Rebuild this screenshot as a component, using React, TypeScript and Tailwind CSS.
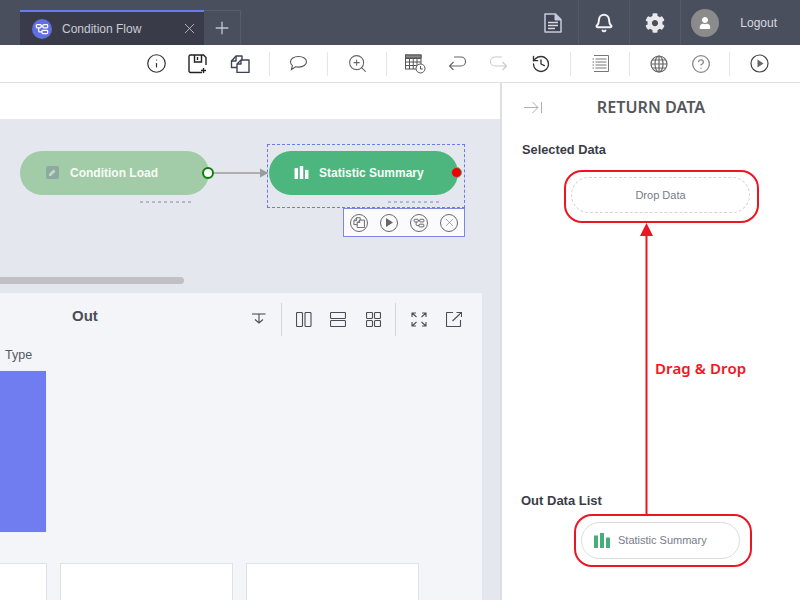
import React from "react";
import { Bell, Info, ZoomIn, History, CircleHelp, Plus, X } from "lucide-react";
import { FaCog, FaUser } from "react-icons/fa";

const FlowGlyph = ({ size = 16, color = "#fff", sw = 1.4 }: { size?: number; color?: string; sw?: number }) => (
  <svg width={size} height={size} viewBox="0 0 16 16" fill="none" stroke={color} strokeWidth={sw}>
    <rect x="1.5" y="3" width="5.5" height="3.6" rx="1" />
    <rect x="9" y="3" width="5.5" height="3.6" rx="1" />
    <rect x="8" y="9.6" width="6.5" height="3.6" rx="1" />
    <path d="M4.2 6.6v3.4c0 .8.5 1.4 1.3 1.4H8M7 4.8h2" />
  </svg>
);

const CopyGlyph = ({ w = 20, h = 18, color = "#3b4250", sw = 1.4 }: { w?: number; h?: number; color?: string; sw?: number }) => (
  <svg width={w} height={h} viewBox="0 0 20 18" fill="none" stroke={color} strokeWidth={sw} strokeLinejoin="round">
    <path d="M7 12.500H1.500V6L6 1h6v4" />
    <path d="M6 1v5H1.500" />
    <path d="M11 5h8v12.500H7V9z" />
    <path d="M11 5v4H7" />
  </svg>
);

const Sep = ({ cls = "" }: { cls?: string }) => <div className={`h-[24px] w-[1px] bg-[#e6e6e8] ${cls}`} />;

const ToolIcon = ({ children }: { children: React.ReactNode }) => (
  <div className="flex h-[24px] w-[42px] items-center justify-center">{children}</div>
);

const OutIcon = ({ children, cls }: { children: React.ReactNode; cls: string }) => (
  <div className={`flex h-[20px] items-center justify-center ${cls}`}>{children}</div>
);

const Bars = ({ color, w = 16, h = 15 }: { color: string; w?: number; h?: number }) => (
  <svg width={w} height={h} viewBox="0 0 16 15" fill={color}>
    <rect x="0" y="2.500" width="4" height="12.500" />
    <rect x="6" y="0" width="4" height="15" />
    <rect x="12" y="4.500" width="4" height="10.500" />
  </svg>
);

const Dashes = () => (
  <svg width="52" height="4" viewBox="0 0 52 4">
    <path d="M0 2h52" stroke="#7c88b0" strokeWidth="1" strokeDasharray="3 3" />
  </svg>
);

const MiniCircle = ({ children }: { children: React.ReactNode }) => (
  <div className="flex h-[18px] w-[18px] items-center justify-center rounded-full border border-[#6a6a6a]">{children}</div>
);

export default function App() {
  const sans = "font-['Liberation_Sans',Arial,sans-serif]";
  return (
    <div className={`flex h-[600px] w-[800px] flex-col overflow-hidden bg-white ${sans}`}>
      {/* Header */}
      <header className="flex h-[45px] shrink-0 items-end bg-[#4a4f5e]">
        <div className="ml-[20px] flex h-[35px] w-[184px] items-center border-t-2 border-[#6b7bef] bg-[#393c48] pl-[12px]">
          <div className="flex h-[20px] w-[20px] items-center justify-center rounded-full bg-[#626fe0]">
            <FlowGlyph size={14} />
          </div>
          <span className="ml-[10px] text-[12px] text-[#c9ccd6]">Condition Flow</span>
          <X size={17} strokeWidth={1.2} className="ml-auto mr-[6px] text-[#c4c6ce]" />
        </div>
        <div className="flex h-[35px] w-[37px] items-center justify-center border border-b-0 border-l-0 border-[#585d6c]">
          <Plus size={20} strokeWidth={1.6} className="text-[#c2c5ce]" />
        </div>
        <div className="ml-auto flex h-[45px] items-center">
          <div className="flex h-full w-[51px] items-center justify-center border-r border-[#555a69]">
            <svg width="18" height="20" viewBox="0 0 18 20" fill="none">
              <path d="M1 1h10.5L17 6.5V19H1z" fill="#3f4352" stroke="#c3cbdc" strokeWidth="1.5" strokeLinejoin="round" />
              <path d="M11 1v6h6" fill="#c3cbdc" stroke="#c3cbdc" strokeWidth="1" />
              <path d="M4 9.5h10M4 12.5h10M4 15.5h7" stroke="#d6d9e2" strokeWidth="1.4" />
            </svg>
          </div>
          <div className="flex h-full w-[51px] items-center justify-center border-r border-[#555a69]">
            <Bell size={20} strokeWidth={2.4} className="text-[#f2f2f4]" />
          </div>
          <div className="flex h-full w-[51px] items-center justify-center border-r border-[#555a69]">
            <FaCog size={20} className="text-[#e9e9ec]" />
          </div>
          <div className="ml-[10px] flex h-[28px] w-[28px] items-center justify-center rounded-full bg-[#8b8b8c]">
            <FaUser size={12} className="text-white" />
          </div>
          <span className="ml-[21px] mr-[23px] text-[12px] text-[#d8dae0]">Logout</span>
        </div>
      </header>

      {/* Toolbar */}
      <div className="flex h-[38px] shrink-0 items-center justify-end gap-[8px] border-b border-[#dfdfe2] pr-[20px]">
        <div className="flex">
          <ToolIcon><Info size={21} strokeWidth={1.4} className="text-[#333]" /></ToolIcon>
          <ToolIcon>
            <svg width="20" height="20" viewBox="0 0 20 20" fill="none" stroke="#222" strokeWidth="1.4">
              <path d="M1 2.500A1.500 1.500 0 0 1 2.500 1h13L18 3.500V11M14 18.500H2.500A1.500 1.500 0 0 1 1 17V2.500" />
              <path d="M6.500 1v7h7V1M9.500 3v3" />
              <path d="M15.500 14v5M13 16.500h5" />
            </svg>
          </ToolIcon>
          <ToolIcon><CopyGlyph /></ToolIcon>
        </div>
        <Sep cls="mr-[-1px]" />
        <ToolIcon>
          <svg width="19" height="17" viewBox="0 0 19 17" fill="none" stroke="#555" strokeWidth="1.1">
            <path d="M9.500 1.500c4.700 0 8 2.300 8 5.300s-3.300 5.300-8 5.300c-1 0-2-.1-2.900-.3L2.500 14.500l.9-3.900C2 9.600 1.500 8.300 1.500 6.800c0-3 3.300-5.300 8-5.300z" />
          </svg>
        </ToolIcon>
        <Sep />
        <ToolIcon><ZoomIn size={21} strokeWidth={1.2} className="text-[#666]" /></ToolIcon>
        <Sep cls="mr-[-1px]" />
        <div className="flex">
          <ToolIcon>
            <svg width="21" height="20" viewBox="0 0 21 20" fill="none" stroke="#555" strokeWidth="1">
              <rect x="0.500" y="1" width="15.500" height="14" fill="#fff" />
              <path d="M.5 4.500h15.500M.5 8h15.500M.5 11.500h15.500M4.500 4.500V15M8.250 4.500V15M12 4.500V15" />
              <rect x="0.500" y="1" width="15.500" height="3" fill="#888" />
              <circle cx="15.500" cy="14.500" r="4.500" fill="#fff" />
              <path d="M15.500 12v3h2.300" />
            </svg>
          </ToolIcon>
          <ToolIcon>
            <svg width="18" height="16" viewBox="0 0 18 16" fill="none" stroke="#666" strokeWidth="1.1">
              <path d="M6 1h7a4.500 4.500 0 0 1 0 9H1.500M5.500 6l-4 4 4 4" />
            </svg>
          </ToolIcon>
          <ToolIcon>
            <svg width="18" height="16" viewBox="0 0 18 16" fill="none" stroke="#c9c9c9" strokeWidth="1.1">
              <path d="M12 1H5a4.500 4.500 0 0 0 0 9h11.500M12.500 6l4 4-4 4" />
            </svg>
          </ToolIcon>
          <ToolIcon><History size={20} strokeWidth={1.6} className="text-[#333]" /></ToolIcon>
        </div>
        <Sep />
        <ToolIcon>
          <svg width="17" height="17" viewBox="0 0 17 17" fill="none" stroke="#777" strokeWidth="1">
            <path d="M2 .5h14.500v16H2" />
            <path d="M3.500 4h11M3.500 7h11M3.500 10h11M3.500 13h11" />
            <path d="M.5 4h1.500M.5 7h1.500M.5 10h1.500M.5 13h1.500" />
          </svg>
        </ToolIcon>
        <Sep />
        <div className="flex">
          <ToolIcon>
            <svg width="18" height="18" viewBox="0 0 18 18" fill="none" stroke="#666" strokeWidth="1.2">
              <circle cx="9" cy="9" r="8" />
              <ellipse cx="9" cy="9" rx="4" ry="8" />
              <path d="M9 1v16M1 9h16M2 5h14M2 13h14" />
            </svg>
          </ToolIcon>
          <ToolIcon><CircleHelp size={20} strokeWidth={1.6} className="text-[#8a8a8a]" /></ToolIcon>
        </div>
        <Sep cls="ml-[-1px]" />
        <ToolIcon>
          <svg width="19" height="19" viewBox="0 0 19 19" fill="none">
            <circle cx="9.500" cy="9.500" r="8.500" stroke="#444" strokeWidth="1.2" />
            <path d="M7.500 5.500 13.500 9.500 7.500 13.500z" fill="#666" />
          </svg>
        </ToolIcon>
      </div>

      {/* Main */}
      <div className="flex min-h-0 flex-1">
        <main className="flex w-[500px] shrink-0 flex-col">
          <div className="h-[36px] shrink-0 bg-white" />
          <div className="flex min-h-0 flex-1 flex-col bg-[#e5e7ef]">
            <div className="relative h-[174px] shrink-0">
              {/* Condition Load node */}
              <div className="absolute left-[20px] top-[32px] flex h-[44px] w-[189px] items-center rounded-full bg-[#a2cba8] pl-[26px]">
                <div className="-mt-[2px] flex h-[13px] w-[13px] items-center justify-center rounded-[2px] bg-[#8fa8a0]">
                  <svg width="9" height="9" viewBox="0 0 9 9"><path d="M1 8V6l4.500-4.500 2 2L3 8z" fill="#c4d8c8" /></svg>
                </div>
                <span className="ml-[11px] text-[12px] font-bold text-[#f7fbf5]">Condition Load</span>
              </div>
              <div className="absolute left-[202px] top-[48px] h-[12px] w-[12px] rounded-full border-2 border-[#0a7d0a] bg-white" />
              <div className="absolute left-[140px] top-[81px]"><Dashes /></div>

              {/* Connector */}
              <svg className="absolute left-[214px] top-[48px]" width="56" height="12" viewBox="0 0 56 12">
                <path d="M0 6h48" stroke="#9a9c9c" strokeWidth="1.5" />
                <path d="M46 1.500 54.500 6 46 10.500z" fill="#9a9c9c" />
              </svg>

              {/* Selection */}
              <div className="absolute left-[267px] top-[25px] h-[64px] w-[198px] border border-dashed border-[#6b7bef]" />
              <div className="absolute left-[269px] top-[32px] flex h-[44px] w-[189px] items-center rounded-full bg-[#4cb67e] pl-[25px]">
                <div className="-mt-[2px] flex"><Bars color="#fff" w={15} h={13} /></div>
                <span className="ml-[10px] text-[12px] font-bold text-[#f8fdf8]">Statistic Summary</span>
              </div>
              <div className="absolute left-[451px] top-[48px] h-[11px] w-[11px] rounded-full border border-[#4cb67e] bg-[#f00000]" />
              <div className="absolute left-[388px] top-[81px]"><Dashes /></div>
              <div className="absolute left-[343px] top-[89px] flex h-[29px] w-[122px] items-center justify-center gap-[12px] border border-[#7d88e4] bg-[#fbfbfe]">
                <MiniCircle><CopyGlyph w={12} h={11} color="#666" sw={1.6} /></MiniCircle>
                <MiniCircle>
                  <svg width="8" height="9" viewBox="0 0 8 9"><path d="M1 0l7 4.500L1 9z" fill="#666" /></svg>
                </MiniCircle>
                <MiniCircle><FlowGlyph size={12} color="#666" sw={1.3} /></MiniCircle>
                <MiniCircle><X size={13} strokeWidth={1} className="text-[#666]" /></MiniCircle>
              </div>

              {/* Scrollbar */}
              <div className="absolute left-0 top-[158px] h-[7px] w-[184px] rounded-r-full bg-[#c1c1c5]" />
            </div>

            {/* Out panel */}
            <section className="flex min-h-0 w-[482px] flex-1 flex-col overflow-hidden bg-[#f4f5f8]">
              <div className="flex h-[46px] shrink-0 items-center pt-[6px]">
                <span className="ml-[72px] -mt-[5px] text-[15px] font-bold text-[#4a4d55]">Out</span>
                <div className="ml-auto flex items-center pr-[16px]">
                  <OutIcon cls="w-[34px] mr-[5px]">
                    <svg width="14" height="12" viewBox="0 0 14 12" fill="none" stroke="#4a4d58" strokeWidth="1.1">
                      <path d="M0 1h13.500" />
                      <path d="M7 1v8M3 6.500 7 10l4-3.500" />
                    </svg>
                  </OutIcon>
                  <div className="h-[33px] w-[1px] bg-[#d3d5db]" />
                  <OutIcon cls="w-[42px] ml-[1px]">
                    <svg width="16" height="15" viewBox="0 0 16 15" fill="none" stroke="#4a4d58" strokeWidth="1.1"><rect x=".5" y=".5" width="6" height="14" rx="1" /><rect x="9" y=".5" width="6" height="14" rx="1" /></svg>
                  </OutIcon>
                  <OutIcon cls="w-[26px]">
                    <svg width="16" height="15" viewBox="0 0 16 15" fill="none" stroke="#4a4d58" strokeWidth="1.1"><rect x=".5" y=".5" width="15" height="6" rx="1" /><rect x=".5" y="8.500" width="15" height="6" rx="1" /></svg>
                  </OutIcon>
                  <OutIcon cls="w-[44px]">
                    <svg width="15" height="15" viewBox="0 0 15 15" fill="none" stroke="#4a4d58" strokeWidth="1.1"><rect x=".5" y=".5" width="6" height="6" rx="1" /><rect x="8.500" y=".5" width="6" height="6" rx="1" /><rect x=".5" y="8.500" width="6" height="6" rx="1" /><rect x="8.500" y="8.500" width="6" height="6" rx="1" /></svg>
                  </OutIcon>
                  <div className="h-[33px] w-[1px] bg-[#d3d5db]" />
                  <OutIcon cls="w-[46px]">
                    <svg width="16" height="15" viewBox="0 0 16 15" fill="none" stroke="#4a4d58" strokeWidth="1.1">
                      <path d="M1 5V1h4M1 1l4.500 4M15 5V1h-4M15 1l-4.500 4M1 10v4h4M1 14l4.500-4M15 10v4h-4M15 14l-4.500-4" />
                    </svg>
                  </OutIcon>
                  <OutIcon cls="w-[24px]">
                    <svg width="16" height="15" viewBox="0 0 16 15" fill="none" stroke="#4a4d58" strokeWidth="1.1">
                      <path d="M7 .5H1a.5.5 0 0 0-.5.5v13a.5.5 0 0 0 .5.5h13a.5.5 0 0 0 .5-.5V8" />
                      <path d="M6.500 9 15.500.5M10.500.5h5v4.500" />
                    </svg>
                  </OutIcon>
                </div>
              </div>
              <div className="pl-[5px] pt-[8px] text-[12.500px] leading-[16px] text-[#555964]">Type</div>
              <div className="mt-[7px] h-[163px] w-[47px] shrink-0 border-r border-b border-t border-[#eef0fb] bg-[#6f7df0]" />
              <div className="mt-[30px] flex flex-1 gap-[13px]">
                <div className="w-[47px] border border-l-0 border-b-0 border-[#e0e1e6] bg-white" />
                <div className="w-[173px] border border-b-0 border-[#e0e1e6] bg-white" />
                <div className="w-[173px] border border-b-0 border-[#e0e1e6] bg-white" />
              </div>
            </section>
          </div>
        </main>

        {/* Right panel */}
        <aside className="relative flex flex-1 flex-col border-l-2 border-[#dedee2] bg-white">
          <div className="relative flex h-[49px] shrink-0 items-center justify-center">
            <svg className="absolute left-[22px] top-[18px]" width="18" height="13" viewBox="0 0 18 13" fill="none" stroke="#b0b0b4" strokeWidth="1">
              <path d="M0 6.500h14M8.500 1l5.500 5.500L8.500 12M17.500 1v11" />
            </svg>
            <h1 className="font-['Noto_Sans',sans-serif] text-[16.200px] font-semibold text-[#55575c]">RETURN DATA</h1>
          </div>
          <div className="ml-[20px] mt-[10px] text-[12.800px] font-bold leading-[16px] text-[#3a3d47]">Selected Data</div>
          <div className="ml-[69px] mt-[19px] flex h-[36px] w-[179px] items-center justify-center rounded-full border border-dashed border-[#d4d4d8] pt-[1px] text-[11px] text-[#767c8a]">
            Drop Data
          </div>
          <div className="ml-[19px] mt-[280px] text-[13px] font-bold leading-[16px] text-[#3a3d47]">Out Data List</div>
          <div className="ml-[79px] mt-[13px] flex h-[37px] w-[159px] items-center rounded-full border border-[#dcdcdf] pl-[12px]">
            <Bars color="#44b078" w={16} h={15} />
            <span className="ml-[8px] text-[11px] text-[#767c8a]">Statistic Summary</span>
          </div>

          {/* Annotation overlays */}
          <div className="absolute left-[62px] top-[87px] h-[53px] w-[195px] rounded-[18px] border-2 border-[#ed1523]" />
          <div className="absolute left-[72px] top-[431px] h-[53px] w-[178px] rounded-[18px] border-2 border-[#ed1523]" />
          <svg className="absolute left-[137px] top-[140px]" width="15" height="293" viewBox="0 0 15 293">
            <path d="M7.500 12V293" stroke="#ed1523" strokeWidth="2" />
            <path d="M7.500 0 14 13H1z" fill="#ed1523" />
          </svg>
          <span className="absolute left-[153px] top-[274px] font-['Noto_Sans',sans-serif] text-[15px] font-semibold tracking-[0.1px] text-[#f5141e]">Drag &amp; Drop</span>
        </aside>
      </div>
    </div>
  );
}
